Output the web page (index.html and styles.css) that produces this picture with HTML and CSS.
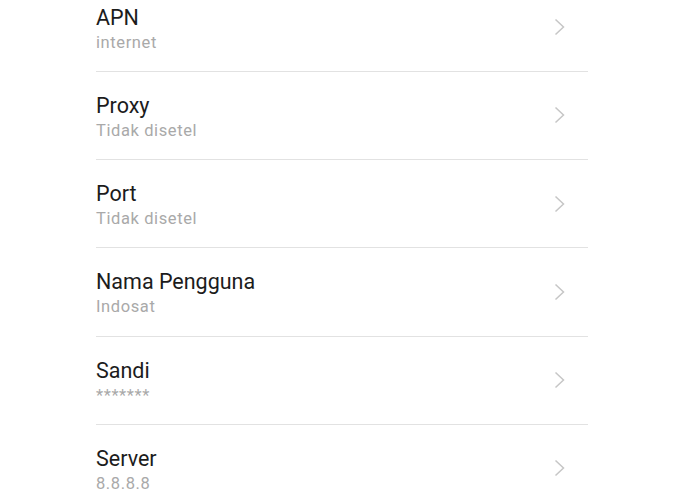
FILE: index.html
```html
<!DOCTYPE html>
<html lang="id">
<head>
    <meta charset="UTF-8">
    <meta name="viewport" content="width=device-width, initial-scale=1.0">
    <title>APN</title>
    <link rel="stylesheet" href="styles.css">
</head>
<body>
    <ul class="lista">
        <li class="item">
            <div class="texto">
                <span class="titulo">APN</span>
                <span class="valor">internet</span>
            </div>
            <svg class="seta" width="12" height="18" viewBox="0 0 12 18"><path d="M1.5 1.5 L9.5 9 L1.5 16.5" fill="none" stroke="#c6c6c6" stroke-width="1.5"/></svg>
        </li>
        <li class="item">
            <div class="texto">
                <span class="titulo">Proxy</span>
                <span class="valor">Tidak disetel</span>
            </div>
            <svg class="seta" width="12" height="18" viewBox="0 0 12 18"><path d="M1.5 1.5 L9.5 9 L1.5 16.5" fill="none" stroke="#c6c6c6" stroke-width="1.5"/></svg>
        </li>
        <li class="item">
            <div class="texto">
                <span class="titulo">Port</span>
                <span class="valor">Tidak disetel</span>
            </div>
            <svg class="seta" width="12" height="18" viewBox="0 0 12 18"><path d="M1.5 1.5 L9.5 9 L1.5 16.5" fill="none" stroke="#c6c6c6" stroke-width="1.5"/></svg>
        </li>
        <li class="item">
            <div class="texto">
                <span class="titulo">Nama Pengguna</span>
                <span class="valor">Indosat</span>
            </div>
            <svg class="seta" width="12" height="18" viewBox="0 0 12 18"><path d="M1.5 1.5 L9.5 9 L1.5 16.5" fill="none" stroke="#c6c6c6" stroke-width="1.5"/></svg>
        </li>
        <li class="item">
            <div class="texto">
                <span class="titulo">Sandi</span>
                <span class="valor">*******</span>
            </div>
            <svg class="seta" width="12" height="18" viewBox="0 0 12 18"><path d="M1.5 1.5 L9.5 9 L1.5 16.5" fill="none" stroke="#c6c6c6" stroke-width="1.5"/></svg>
        </li>
        <li class="item">
            <div class="texto">
                <span class="titulo">Server</span>
                <span class="valor">8.8.8.8</span>
            </div>
            <svg class="seta" width="12" height="18" viewBox="0 0 12 18"><path d="M1.5 1.5 L9.5 9 L1.5 16.5" fill="none" stroke="#c6c6c6" stroke-width="1.5"/></svg>
        </li>
    </ul>
</body>
</html>
```
FILE: styles.css
```css
body {
    margin: 0;
    background-color: #fff;
    font-family: Roboto, "Noto Sans", sans-serif;
    overflow: hidden;
}
.lista {
    list-style-type: none;
    margin: -16.5px 0 0 0;
    padding: 0 104px 0 96px;
}
.item {
    display: flex;
    align-items: flex-start;
    justify-content: space-between;
    height: 88.25px;
    padding-top: 21px;
    border-bottom: 1px solid #e2e2e2;
    box-sizing: border-box;
}
.texto {
    display: flex;
    flex-direction: column;
}
.titulo {
    font-size: 21.5px;
    color: #1c1c1c;
    line-height: 26px;
}
.valor {
    margin-top: 1px;
    font-size: 16.5px;
    letter-spacing: 0.6px;
    color: #a9a9a9;
    line-height: 22px;
}
.seta {
    align-self: center;
    margin-top: -21px;
    margin-right: 22px;
}
```
